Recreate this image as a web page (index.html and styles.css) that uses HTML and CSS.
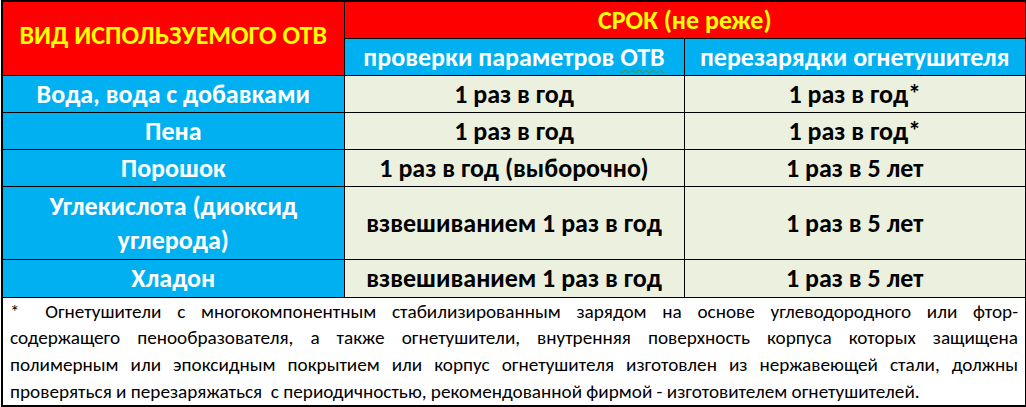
FILE: index.html
```html
<!DOCTYPE html>
<html lang="ru">
<head>
<meta charset="utf-8">
<title>Сроки проверки огнетушителей</title>
<link rel="stylesheet" href="styles.css">
</head>
<body>
<table class="grid">
  <colgroup>
    <col class="c1">
    <col class="c2">
    <col class="c3">
  </colgroup>
  <tr class="r-top">
    <th class="red main" rowspan="2">ВИД ИСПОЛЬЗУЕМОГО ОТВ</th>
    <th class="red" colspan="2">СРОК (не реже)</th>
  </tr>
  <tr class="r-sub">
    <th class="blue">проверки параметров <span class="spell">ОТВ</span></th>
    <th class="blue">перезарядки огнетушителя</th>
  </tr>
  <tr class="r">
    <td class="blue">Вода, вода с добавками</td>
    <td class="light">1 раз в год</td>
    <td class="light">1 раз в год*</td>
  </tr>
  <tr class="r">
    <td class="blue">Пена</td>
    <td class="light">1 раз в год</td>
    <td class="light">1 раз в год*</td>
  </tr>
  <tr class="r">
    <td class="blue">Порошок</td>
    <td class="light">1 раз в год (выборочно)</td>
    <td class="light">1 раз в 5 лет</td>
  </tr>
  <tr class="r-tall">
    <td class="blue">Углекислота (диоксид углерода)</td>
    <td class="light">взвешиванием 1 раз в год</td>
    <td class="light">1 раз в 5 лет</td>
  </tr>
  <tr class="r-last">
    <td class="blue">Хладон</td>
    <td class="light">взвешиванием 1 раз в год</td>
    <td class="light">1 раз в 5 лет</td>
  </tr>
  <tr class="r-note">
    <td class="note" colspan="3">
      <span class="ln">*<span class="gap"></span> Огнетушители с многокомпонентным стабилизированным зарядом на основе углеводородного или фтор-</span>
      <span class="ln">содержащего пенообразователя, а также огнетушители, внутренняя поверхность корпуса которых защищена</span>
      <span class="ln">полимерным или эпоксидным покрытием или корпус огнетушителя изготовлен из нержавеющей стали, должны</span>
      <span class="ln last">проверяться и перезаряжаться&nbsp; с периодичностью, рекомендованной фирмой - изготовителем огнетушителей.</span>
    </td>
  </tr>
</table>
</body>
</html>
```

FILE: styles.css
```css
html, body {
  margin: 0;
  padding: 0;
  background: #ffffff;
}

body {
  padding: 0 1px 0 1px;
  font-family: Carlito, Lato, "Open Sans", "DejaVu Sans", sans-serif;
}

.grid {
  border-collapse: collapse;
  table-layout: fixed;
  width: 1024px;
  border: 2px solid #000;
}

.c1 { width: 342px; }
.c2 { width: 340px; }
.c3 { width: 342px; }

.grid th,
.grid td {
  border: 1px solid #000;
  padding: 0 6px;
  text-align: center;
  vertical-align: middle;
  font-weight: bold;
  font-size: 26px;
  line-height: 34px;
}

.grid th.main {
  padding-bottom: 6px;
}

.r-top { height: 37px; }
.r-sub { height: 37px; }
.r { height: 37px; }
.r-tall { height: 73px; }
.r-last { height: 38px; }

.red {
  background: #ff0000;
  color: #ffff00;
}

.blue {
  background: #00b0f0;
  color: #ffffff;
}

.light {
  background: #ebf1de;
  color: #000000;
}

.spell {
  text-decoration: underline wavy #3c9a3c;
  text-decoration-thickness: 1px;
  text-underline-offset: 3px;
}

.grid td.note {
  background: #ffffff;
  color: #000000;
  font-weight: normal;
  font-size: 19.2px;
  line-height: 26.7px;
  padding: 1px 7px 0 7px;
  height: 100px;
}

.ln {
  display: block;
  text-align: justify;
  text-align-last: justify;
}

.ln.last {
  text-align: left;
  text-align-last: left;
}

.gap {
  display: inline-block;
  width: 10px;
}
```
